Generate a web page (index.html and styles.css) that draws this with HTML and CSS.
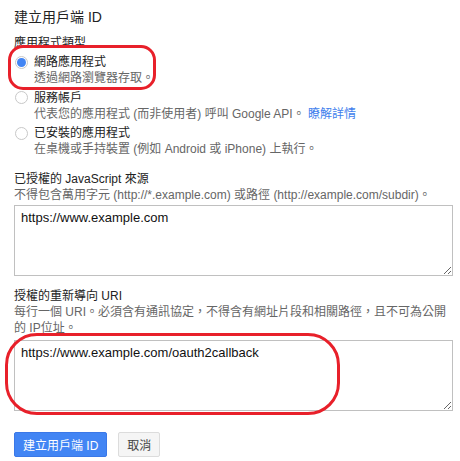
FILE: index.html
```html
<html>
<head>
<meta charset="utf-8">
<link rel="stylesheet" href="styles.css">
</head>
<body>

<div class="page">
  <h1 class="title">建立用戶端 ID</h1>

  <div class="field-label">應用程式類型</div>
  <div class="radio-list">
    <div class="option">
      <span class="radio checked"></span>
      <div class="option-text">
        <div class="option-name">網路應用程式</div>
        <div class="hint">透過網路瀏覽器存取。</div>
      </div>
    </div>
    <div class="option">
      <span class="radio"></span>
      <div class="option-text">
        <div class="option-name">服務帳戶</div>
        <div class="hint">代表您的應用程式 (而非使用者) 呼叫 Google API。 <a class="link" href="#">瞭解詳情</a></div>
      </div>
    </div>
    <div class="option">
      <span class="radio"></span>
      <div class="option-text">
        <div class="option-name">已安裝的應用程式</div>
        <div class="hint">在桌機或手持裝置 (例如 Android 或 iPhone) 上執行。</div>
      </div>
    </div>
  </div>

  <div class="field-label origins">已授權的 JavaScript 來源</div>
  <div class="hint">不得包含萬用字元 (http://*.example.com) 或路徑 (http://example.com/subdir)。</div>
  <textarea class="box">https://www.example.com</textarea>

  <div class="field-label redirects">授權的重新導向 URI</div>
  <div class="hint">每行一個 URI。必須含有通訊協定，不得含有網址片段和相關路徑，且不可為公開<br>的 IP位址。</div>
  <textarea class="box">https://www.example.com/oauth2callback</textarea>

  <div class="actions">
    <button class="btn primary">建立用戶端 ID</button>
    <button class="btn">取消</button>
  </div>
</div>

<div class="mark mark-web"></div>
<div class="mark mark-uri"></div>

</body>
</html>
```

FILE: styles.css
```css
body {
  margin: 0;
  background: white;
  font-family: "Liberation Sans", Arial, "Noto Sans CJK TC", sans-serif;
  font-size: 12px;
  line-height: 16px;
  color: #222;
}

.page {
  padding: 7px 7px 0 14px;
}

.title {
  margin: 0;
  font-size: 14px;
  font-weight: normal;
  line-height: 20px;
  color: #222;
}

.field-label {
  margin-top: 8px;
  color: #222;
}

.field-label.origins {
  margin-top: 14px;
}

.field-label.redirects {
  margin-top: 12px;
}

.hint {
  color: #666;
}

.link {
  color: #427fed;
  text-decoration: none;
}

.radio-list {
  margin-top: 3px;
  display: flex;
  flex-direction: column;
  gap: 3.5px;
}

.option {
  display: flex;
  gap: 6px;
}

.radio {
  position: relative;
  flex: none;
  width: 13px;
  height: 13px;
  margin: 1.5px 0 0 1px;
  box-sizing: border-box;
  border: 1px solid #c8c8c8;
  border-radius: 50%;
  background: white;
}

.radio.checked::after {
  content: "";
  position: absolute;
  left: 1px;
  top: 1px;
  width: 9px;
  height: 9px;
  border-radius: 50%;
  background: #4285f4;
}

.option-name {
  color: #222;
}

.box {
  display: block;
  width: 439px;
  height: 71px;
  box-sizing: border-box;
  margin-top: 2px;
  padding: 4px 6px;
  border: 1px solid #c0c0c0;
  border-radius: 0;
  font-family: "Liberation Sans", Arial, sans-serif;
  font-size: 13px;
  line-height: 16px;
  color: #111;
  resize: vertical;
  outline: none;
}

.hint + .box {
  margin-top: 2px;
}

.redirects + .hint + .box {
  margin-top: 4px;
}

.actions {
  margin-top: 21px;
  display: flex;
  gap: 11px;
}

.btn {
  height: 25px;
  padding: 0 8px;
  box-sizing: border-box;
  border: 1px solid #dcdcdc;
  border-radius: 2px;
  background: #f5f5f5;
  color: #444;
  font-family: "Liberation Sans", Arial, "Noto Sans CJK TC", sans-serif;
  font-size: 12px;
}

.btn.primary {
  background: #4285f4;
  border-color: #3b78e7;
  color: white;
}

.mark {
  position: absolute;
  box-sizing: border-box;
  border: 3px solid #e8202a;
}

.mark-web {
  left: 8px;
  top: 45px;
  width: 148px;
  height: 45px;
  border-radius: 15px;
}

.mark-uri {
  left: 5px;
  top: 333px;
  width: 335px;
  height: 82px;
  border-radius: 32px;
}
```
